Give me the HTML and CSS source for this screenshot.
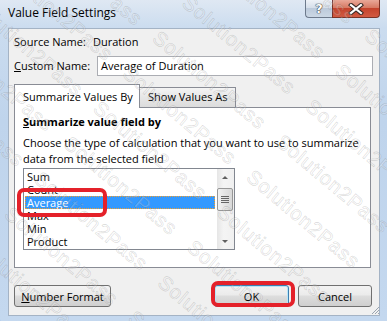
FILE: index.html
```html
<!DOCTYPE html>
<html lang="en">
<head>
  <meta charset="UTF-8" />
  <title>Value Field Settings</title>
  <link rel="stylesheet" href="styles.css">
</head>
<body>
  <div class="window">
    <!-- title bar -->
    <div class="titlebar">
      <span class="title">Value Field Settings</span>
      <div class="caption-btns">
        <span class="cap help">?</span>
        <span class="cap close">
          <svg width="16" height="12" viewBox="0 0 16 12">
            <path d="M3 2 L13 10 M13 2 L3 10" stroke="#3b2a26" stroke-width="4.2" stroke-linecap="square" fill="none"/>
            <path d="M3 2 L13 10 M13 2 L3 10" stroke="#fff" stroke-width="2.2" stroke-linecap="square" fill="none"/>
          </svg>
        </span>
      </div>
    </div>

    <div class="client">
      <div class="row source">
        <span class="label">Source Name:</span>
        <span class="value">Duration</span>
      </div>
      <div class="row custom">
        <span class="label"><u>C</u>ustom Name:</span>
        <div class="input">Average of Duration</div>
      </div>

      <div class="tabs">
        <div class="tab active">Summarize Values By</div>
        <div class="tab">Show Values As</div>
      </div>
      <div class="panel">
        <div class="heading"><u>S</u>ummarize value field by</div>
        <p class="desc">Choose the type of calculation that you want to use to summarize<br>data from the selected field</p>
        <div class="listbox">
          <ul class="items">
            <li>Sum</li>
            <li>Count</li>
            <li class="selected">Average</li>
            <li>Max</li>
            <li>Min</li>
            <li>Product</li>
          </ul>
          <div class="scrollbar">
            <div class="arrow up"></div>
            <div class="thumb"><span></span><span></span><span></span><span></span></div>
            <div class="track"></div>
            <div class="arrow down"></div>
          </div>
        </div>
      </div>

      <div class="buttons">
        <button class="btn number"><u>N</u>umber Format</button>
        <button class="btn ok">OK</button>
        <button class="btn cancel">Cancel</button>
      </div>
    </div>

    <svg class="grip" width="9" height="9" viewBox="0 0 9 9">
      <path d="M8 1 L1 8 M8 4 L4 8 M8 7 L7 8" stroke="#9aa4b0" stroke-width="1" fill="none"/>
    </svg>

    <!-- annotations -->
    <div class="mark mark-average"></div>
    <div class="mark mark-ok"></div>

    <div class="watermark">
      <div>Solution2Pass Solution2Pass Solution2Pass Solution2Pass</div>
      <div>Solution2Pass Solution2Pass Solution2Pass Solution2Pass</div>
      <div>Solution2Pass Solution2Pass Solution2Pass Solution2Pass</div>
      <div>Solution2Pass Solution2Pass Solution2Pass Solution2Pass</div>
      <div>Solution2Pass Solution2Pass Solution2Pass Solution2Pass</div>
      <div>Solution2Pass Solution2Pass Solution2Pass Solution2Pass</div>
      <div>Solution2Pass Solution2Pass Solution2Pass Solution2Pass</div>
      <div>Solution2Pass Solution2Pass Solution2Pass Solution2Pass</div>
      <div>Solution2Pass Solution2Pass Solution2Pass Solution2Pass</div>
      <div>Solution2Pass Solution2Pass Solution2Pass Solution2Pass</div>
      <div>Solution2Pass Solution2Pass Solution2Pass Solution2Pass</div>
      <div>Solution2Pass Solution2Pass Solution2Pass Solution2Pass</div>
      <div>Solution2Pass Solution2Pass Solution2Pass Solution2Pass</div>
      <div>Solution2Pass Solution2Pass Solution2Pass Solution2Pass</div>
    </div>
  </div>
</body>
</html>
```

FILE: styles.css
```css
* {
  box-sizing: border-box;
}

body {
  margin: 0;
  font-family: "Open Sans", "Noto Sans", sans-serif;
  font-size: 11px;
  color: #000;
}

.window {
  position: relative;
  width: 387px;
  height: 321px;
  display: flex;
  flex-direction: column;
  padding: 0 7px 5px 8px;
  overflow: hidden;
  background: linear-gradient(#dfe8f3, #cbdcef 28px, #bfd4ec 120px, #c4d8ef);
}

.titlebar {
  height: 28px;
  flex: none;
  display: flex;
  justify-content: space-between;
  align-items: flex-start;
}

.title {
  margin-top: 5px;
  font-size: 12px;
  line-height: 16px;
}

.caption-btns {
  display: flex;
}

.cap {
  height: 18px;
  display: flex;
  align-items: center;
  justify-content: center;
  border: 1px solid #6d7a8c;
  border-top: none;
}

.help {
  width: 27px;
  border-right: none;
  border-bottom-left-radius: 4px;
  background: linear-gradient(#eef2f7, #d6dfea 45%, #bccadb 50%, #cbd7e5);
  color: #fff;
  font-family: "DejaVu Sans", sans-serif;
  font-weight: bold;
  font-size: 13px;
  text-shadow: 0 0 1px #333, 0 0 1px #333, 0 0 1px #333;
}

.close {
  width: 48px;
  border-color: #7a3327;
  border-bottom-right-radius: 4px;
  background: linear-gradient(#e9a898, #d77a64 45%, #c4432c 50%, #d25a42);
}

.client {
  flex: 1;
  display: flex;
  flex-direction: column;
  background: #f0f0f0;
  border: 1px solid #a4b3c5;
  padding: 5px 6px 0 5px;
}

.row {
  display: flex;
  align-items: center;
  line-height: 16px;
}

.source .label {
  width: 79px;
}

.custom {
  height: 20px;
  margin-top: 6px;
}

.custom .label {
  width: 83px;
}

.input {
  flex: 1;
  height: 20px;
  border: 1px solid #abadb3;
  background: #fff;
  padding-left: 3px;
  line-height: 18px;
}

.tabs {
  position: relative;
  z-index: 1;
  display: flex;
  align-items: flex-end;
  height: 24px;
  margin-top: 8px;
  margin-bottom: -1px;
}

.tab {
  height: 21px;
  width: 96px;
  padding: 1px 0 0 8px;
  line-height: 16px;
  border: 1px solid #898c95;
  border-left: none;
  background: linear-gradient(#f4f4f4, #e6e6e6 50%, #dcdcdc);
}

.tab.active {
  width: 126px;
  height: 24px;
  padding: 4px 0 0 8px;
  border-left: 1px solid #898c95;
  border-bottom: none;
  background: #fff;
}

.panel {
  height: 161px;
  margin-right: 2px;
  border: 1px solid #898c95;
  background: #fff;
  padding: 6px 8px 0 8px;
}

.heading {
  font-weight: bold;
  line-height: 16px;
}

.desc {
  margin: 5px 0 0;
  line-height: 16px;
  white-space: nowrap;
}

.listbox {
  display: flex;
  width: 212px;
  height: 82px;
  margin-top: 1px;
  border: 1px solid #828790;
  background: #fff;
}

.items {
  flex: 1;
  list-style: none;
  margin: 0;
  padding: 1px 0 0;
  overflow: hidden;
}

.items li {
  margin: 0 2px 0 1px;
  padding-left: 2px;
  height: 13px;
  line-height: 13px;
}

.items li.selected {
  background: #3399ff;
  color: #fff;
  outline: 1px dotted #f0a030;
  outline-offset: -1px;
}

.scrollbar {
  width: 17px;
  display: flex;
  flex-direction: column;
  background: linear-gradient(90deg, #e6e6e6, #f4f4f4 40%, #f0f0f0);
}

.arrow {
  height: 17px;
  position: relative;
}

.arrow::after {
  content: "";
  position: absolute;
  left: 5px;
  border-left: 3px solid transparent;
  border-right: 3px solid transparent;
}

.arrow.up::after {
  top: 7px;
  border-bottom: 3px solid #606060;
}

.arrow.down::after {
  top: 8px;
  border-top: 3px solid #606060;
}

.thumb {
  height: 23px;
  margin: 2px 1px 0 0;
  border: 1px solid #979797;
  border-radius: 2px;
  background: linear-gradient(90deg, #f2f2f2, #e4e4e4 50%, #d8d8d8);
  display: flex;
  flex-direction: column;
  align-items: center;
  justify-content: center;
  gap: 1px;
}

.thumb span {
  width: 8px;
  height: 1px;
  background: #666;
}

.track {
  flex: 1;
}

.buttons {
  display: flex;
  height: 22px;
  margin-top: 17px;
  margin-right: 1px;
}

.btn {
  height: 22px;
  font-family: inherit;
  font-size: 11px;
  color: #000;
  border: 1px solid #707070;
  border-radius: 3px;
  background: linear-gradient(#f3f3f3, #ebebeb 45%, #dddddd 50%, #cfcfcf);
  padding: 0;
}

.number {
  width: 97px;
}

.ok {
  width: 75px;
  margin-left: auto;
  border-color: #3c7fb1;
  box-shadow: inset 0 0 0 1px #b8e6f9;
}

.cancel {
  width: 74px;
  margin-left: 9px;
}

.grip {
  position: absolute;
  right: 7px;
  bottom: 6px;
}

.mark {
  position: absolute;
  border: 4px solid #e4212a;
  border-radius: 7px;
  z-index: 3;
}

.mark-average {
  left: 17px;
  top: 188px;
  width: 90px;
  height: 29px;
}

.mark-ok {
  left: 211px;
  top: 281px;
  width: 84px;
  height: 26px;
}

.watermark {
  position: absolute;
  left: -200px;
  top: -220px;
  width: 800px;
  transform: rotate(40deg);
  pointer-events: none;
  z-index: 2;
  font-family: "Liberation Sans", sans-serif;
  font-size: 20px;
  line-height: 46px;
  letter-spacing: 1px;
  word-spacing: 14px;
  white-space: nowrap;
  color: rgba(255, 255, 255, 0.2);
  -webkit-text-stroke: 0.6px rgba(80, 80, 80, 0.22);
}
```
